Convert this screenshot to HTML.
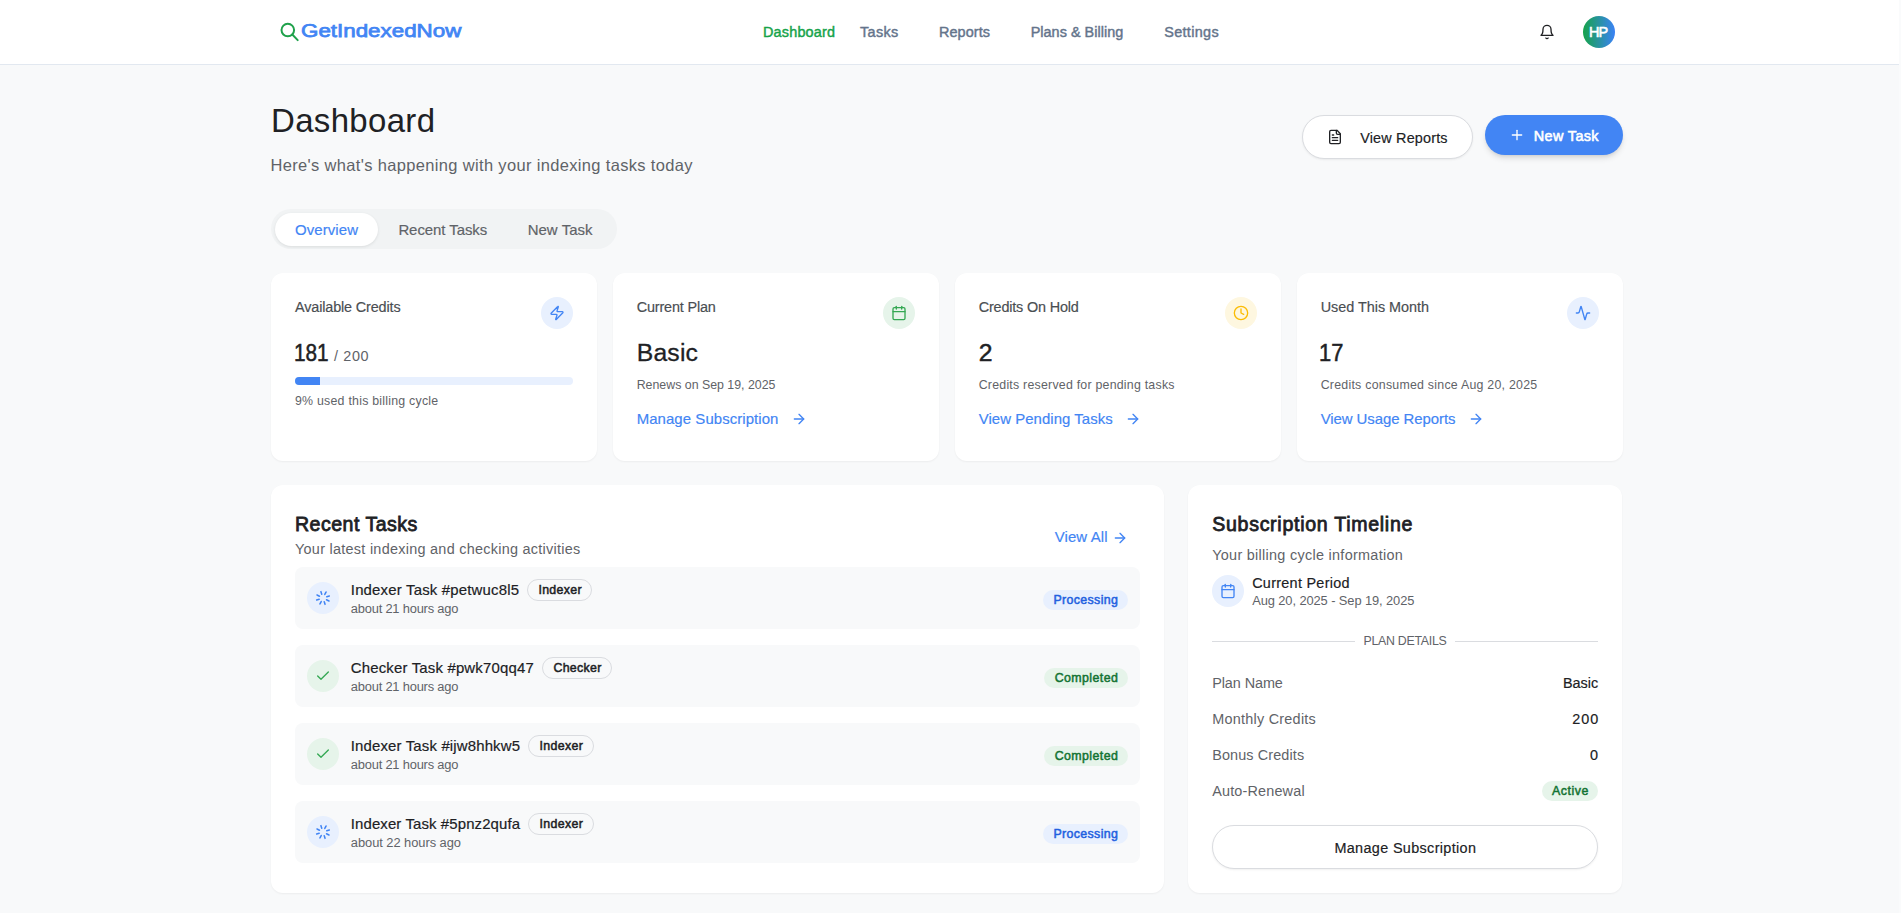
<!DOCTYPE html>
<html lang="en">
<head>
<meta charset="utf-8">
<title>Dashboard - GetIndexedNow</title>
<style>
*{box-sizing:border-box;margin:0;padding:0}
html,body{width:1901px;height:913px;overflow:hidden}
body{position:relative;background:#f8f9fa;font-family:"Liberation Sans",Arial,sans-serif;color:#202124;-webkit-font-smoothing:antialiased}
.t{position:absolute;white-space:nowrap;display:block}
.abs{position:absolute}
ul{list-style:none}
header{position:absolute;left:0;top:0;width:1899px;height:65px;background:#fff;border-bottom:1px solid #e2e8f0}
.scroll{position:absolute;right:0;top:0;width:2px;height:913px;background:#fafbfc}
svg{position:absolute;display:block;fill:none;stroke:currentColor;stroke-width:2;stroke-linecap:round;stroke-linejoin:round}
.card{position:absolute;background:#fff;border-radius:12px;box-shadow:0 1px 2px rgba(0,0,0,.05)}
.circle{position:absolute;width:32px;height:32px;border-radius:50%}
.row{position:absolute;left:295px;width:845px;height:62px;background:#f8f9fa;border-radius:8px}
.pill{position:absolute;border-radius:999px}
.badge{position:absolute;border:1px solid #dadce0;border-radius:999px;height:22px}
.btn{position:absolute;border-radius:999px}
#logo{top:22px;font-size:18.7px;line-height:18.7px;font-weight:400;-webkit-text-stroke:0.75px currentColor;color:#4285f4;left:301px;transform:scaleX(1.1961);transform-origin:0 0;}
#nav1{top:25px;font-size:14.42px;line-height:14.42px;font-weight:400;-webkit-text-stroke:0.43px currentColor;color:#16a34a;left:763px;letter-spacing:0.189px;}
#nav2{top:25px;font-size:14.42px;line-height:14.42px;font-weight:400;-webkit-text-stroke:0.43px currentColor;color:#64748b;left:860px;letter-spacing:0.343px;}
#nav3{top:25px;font-size:14.42px;line-height:14.42px;font-weight:400;-webkit-text-stroke:0.43px currentColor;color:#64748b;left:939px;letter-spacing:0.091px;}
#nav4{top:25px;font-size:14.42px;line-height:14.42px;font-weight:400;-webkit-text-stroke:0.43px currentColor;color:#64748b;left:1030.7px;letter-spacing:0.029px;}
#nav5{top:25px;font-size:14.42px;line-height:14.42px;font-weight:400;-webkit-text-stroke:0.43px currentColor;color:#64748b;left:1164.2px;letter-spacing:0.334px;}
#avatar{top:25px;font-size:14.42px;line-height:14.42px;font-weight:400;-webkit-text-stroke:0.58px currentColor;color:#fff;left:1589px;letter-spacing:-1.016px;}
#title{top:105px;font-size:32.96px;line-height:32.96px;font-weight:400;color:#202124;left:271px;letter-spacing:0.348px;}
#subtitle{top:157px;font-size:16.48px;line-height:16.48px;font-weight:400;color:#5f6368;left:270.5px;letter-spacing:0.347px;}
#btnReports{top:131px;font-size:14.42px;line-height:14.42px;font-weight:400;-webkit-text-stroke:0.17px currentColor;color:#202124;left:1360.2px;letter-spacing:0.18px;}
#btnNew{top:129px;font-size:14.42px;line-height:14.42px;font-weight:400;-webkit-text-stroke:0.58px currentColor;color:#fff;left:1533.7px;letter-spacing:0.387px;}
#tab1{top:223px;font-size:14.94px;line-height:14.94px;font-weight:400;-webkit-text-stroke:0.18px currentColor;color:#4285f4;left:295px;letter-spacing:0.105px;}
#tab2{top:223px;font-size:14.94px;line-height:14.94px;font-weight:400;-webkit-text-stroke:0.18px currentColor;color:#5f6368;left:398.4px;letter-spacing:-0.055px;}
#tab3{top:223px;font-size:14.94px;line-height:14.94px;font-weight:400;-webkit-text-stroke:0.18px currentColor;color:#5f6368;left:527.7px;letter-spacing:0.045px;}
#c1t{top:300px;font-size:14.42px;line-height:14.42px;font-weight:400;-webkit-text-stroke:0.17px currentColor;color:#4a4e52;left:295px;letter-spacing:-0.14px;}
#c1v{top:341px;font-size:24.72px;line-height:24.72px;font-weight:400;-webkit-text-stroke:0.54px currentColor;color:#202124;left:293.8px;}
#c1v2{top:349px;font-size:14.42px;line-height:14.42px;font-weight:400;color:#5f6368;left:334px;letter-spacing:0.638px;}
#c1s{top:395px;font-size:12.36px;line-height:12.36px;font-weight:400;color:#5f6368;left:295px;letter-spacing:0.232px;}
#c2t{top:300px;font-size:14.42px;line-height:14.42px;font-weight:400;-webkit-text-stroke:0.17px currentColor;color:#4a4e52;left:636.7px;letter-spacing:-0.161px;}
#c2v{top:341px;font-size:24.72px;line-height:24.72px;font-weight:400;-webkit-text-stroke:0.3px currentColor;color:#202124;left:636.7px;letter-spacing:0.212px;}
#c2s{top:379px;font-size:12.36px;line-height:12.36px;font-weight:400;color:#5f6368;left:636.7px;letter-spacing:-0.001px;}
#c2l{top:412px;font-size:14.94px;line-height:14.94px;font-weight:400;-webkit-text-stroke:0.18px currentColor;color:#4285f4;left:636.7px;letter-spacing:0.075px;}
#c3t{top:300px;font-size:14.42px;line-height:14.42px;font-weight:400;-webkit-text-stroke:0.17px currentColor;color:#4a4e52;left:978.7px;letter-spacing:-0.17px;}
#c3v{top:341px;font-size:24.72px;line-height:24.72px;font-weight:400;-webkit-text-stroke:0.49px currentColor;color:#202124;left:978.7px;letter-spacing:0.25px;}
#c3s{top:379px;font-size:12.36px;line-height:12.36px;font-weight:400;color:#5f6368;left:978.7px;letter-spacing:0.229px;}
#c3l{top:412px;font-size:14.94px;line-height:14.94px;font-weight:400;-webkit-text-stroke:0.18px currentColor;color:#4285f4;left:978.7px;letter-spacing:0.051px;}
#c4t{top:300px;font-size:14.42px;line-height:14.42px;font-weight:400;-webkit-text-stroke:0.17px currentColor;color:#4a4e52;left:1320.7px;letter-spacing:-0.024px;}
#c4v{top:341px;font-size:24.72px;line-height:24.72px;font-weight:400;-webkit-text-stroke:0.54px currentColor;color:#202124;left:1319.3px;}
#c4s{top:379px;font-size:12.36px;line-height:12.36px;font-weight:400;color:#5f6368;left:1320.7px;letter-spacing:0.244px;}
#c4l{top:412px;font-size:14.94px;line-height:14.94px;font-weight:400;-webkit-text-stroke:0.18px currentColor;color:#4285f4;left:1320.7px;letter-spacing:-0.064px;}
#rtT{top:515px;font-size:19.57px;line-height:19.57px;font-weight:400;-webkit-text-stroke:0.78px currentColor;color:#202124;left:295px;letter-spacing:0.484px;}
#rtS{top:542px;font-size:14.42px;line-height:14.42px;font-weight:400;color:#5f6368;left:295px;letter-spacing:0.278px;}
#rtA{top:530px;font-size:14.94px;line-height:14.94px;font-weight:400;-webkit-text-stroke:0.18px currentColor;color:#4285f4;left:1054.7px;letter-spacing:0.122px;}
#r1t{top:583px;font-size:14.94px;line-height:14.94px;font-weight:400;-webkit-text-stroke:0.18px currentColor;color:#202124;left:350.8px;letter-spacing:0.185px;}
#r1b{top:584px;font-size:12.36px;line-height:12.36px;font-weight:400;-webkit-text-stroke:0.49px currentColor;color:#202124;left:538.4px;letter-spacing:0.328px;}
#r1a{top:603px;font-size:12.88px;line-height:12.88px;font-weight:400;color:#5f6368;left:350.8px;letter-spacing:-0.198px;}
#r1s{top:594px;font-size:12.36px;line-height:12.36px;font-weight:400;-webkit-text-stroke:0.49px currentColor;color:#2160e0;left:1053.4px;letter-spacing:0.373px;}
#r2t{top:661px;font-size:14.94px;line-height:14.94px;font-weight:400;-webkit-text-stroke:0.18px currentColor;color:#202124;left:350.8px;letter-spacing:0.173px;}
#r2b{top:662px;font-size:12.36px;line-height:12.36px;font-weight:400;-webkit-text-stroke:0.49px currentColor;color:#202124;left:553.4px;letter-spacing:0.311px;}
#r2a{top:681px;font-size:12.88px;line-height:12.88px;font-weight:400;color:#5f6368;left:350.8px;letter-spacing:-0.198px;}
#r2s{top:672px;font-size:12.36px;line-height:12.36px;font-weight:400;-webkit-text-stroke:0.49px currentColor;color:#137333;left:1054.7px;letter-spacing:0.427px;}
#r3t{top:739px;font-size:14.94px;line-height:14.94px;font-weight:400;-webkit-text-stroke:0.18px currentColor;color:#202124;left:350.8px;letter-spacing:0.155px;}
#r3b{top:740px;font-size:12.36px;line-height:12.36px;font-weight:400;-webkit-text-stroke:0.49px currentColor;color:#202124;left:539.4px;letter-spacing:0.394px;}
#r3a{top:759px;font-size:12.88px;line-height:12.88px;font-weight:400;color:#5f6368;left:350.8px;letter-spacing:-0.198px;}
#r3s{top:750px;font-size:12.36px;line-height:12.36px;font-weight:400;-webkit-text-stroke:0.49px currentColor;color:#137333;left:1054.7px;letter-spacing:0.427px;}
#r4t{top:817px;font-size:14.94px;line-height:14.94px;font-weight:400;-webkit-text-stroke:0.18px currentColor;color:#202124;left:350.8px;letter-spacing:0.116px;}
#r4b{top:818px;font-size:12.36px;line-height:12.36px;font-weight:400;-webkit-text-stroke:0.49px currentColor;color:#202124;left:539.4px;letter-spacing:0.394px;}
#r4a{top:837px;font-size:12.88px;line-height:12.88px;font-weight:400;color:#5f6368;left:350.8px;letter-spacing:-0.045px;}
#r4s{top:828px;font-size:12.36px;line-height:12.36px;font-weight:400;-webkit-text-stroke:0.49px currentColor;color:#2160e0;left:1053.4px;letter-spacing:0.373px;}
#stT{top:515px;font-size:19.57px;line-height:19.57px;font-weight:400;-webkit-text-stroke:0.78px currentColor;color:#202124;left:1212.2px;letter-spacing:0.713px;}
#stS{top:548px;font-size:14.42px;line-height:14.42px;font-weight:400;color:#5f6368;left:1212.2px;letter-spacing:0.295px;}
#stP{top:576px;font-size:14.42px;line-height:14.42px;font-weight:400;-webkit-text-stroke:0.17px currentColor;color:#202124;left:1252.2px;letter-spacing:0.278px;}
#stD{top:595px;font-size:12.88px;line-height:12.88px;font-weight:400;color:#5f6368;left:1252.2px;letter-spacing:-0.094px;}
#stH{top:635px;font-size:12.36px;line-height:12.36px;font-weight:400;color:#5f6368;left:1363.5px;letter-spacing:-0.275px;}
#k1{top:676px;font-size:14.42px;line-height:14.42px;font-weight:400;color:#5f6368;left:1212.2px;letter-spacing:-0.071px;}
#v1{top:676px;font-size:14.42px;line-height:14.42px;font-weight:400;-webkit-text-stroke:0.17px currentColor;color:#202124;left:1563px;letter-spacing:-0.009px;}
#k2{top:712px;font-size:14.42px;line-height:14.42px;font-weight:400;color:#5f6368;left:1212.2px;letter-spacing:0.252px;}
#v2{top:712px;font-size:14.42px;line-height:14.42px;font-weight:400;-webkit-text-stroke:0.17px currentColor;color:#202124;left:1572.3px;letter-spacing:0.927px;}
#k3{top:748px;font-size:14.42px;line-height:14.42px;font-weight:400;color:#5f6368;left:1212.2px;letter-spacing:0.118px;}
#v3{top:748px;font-size:14.42px;line-height:14.42px;font-weight:400;-webkit-text-stroke:0.17px currentColor;color:#202124;left:1589.9px;letter-spacing:0.284px;}
#k4{top:784px;font-size:14.42px;line-height:14.42px;font-weight:400;color:#5f6368;left:1212.2px;letter-spacing:0.173px;}
#v4{top:785px;font-size:12.36px;line-height:12.36px;font-weight:400;-webkit-text-stroke:0.49px currentColor;color:#137333;left:1552px;letter-spacing:0.546px;}
#stB{top:841px;font-size:14.42px;line-height:14.42px;font-weight:400;-webkit-text-stroke:0.17px currentColor;color:#202124;left:1334.4px;letter-spacing:0.348px;}
</style>
</head>
<body>
<header>
  <a class="brand">
    <svg style="left:274px;top:16px;color:#1fa14b;stroke-width:2" width="36" height="30" viewBox="0 0 36 30"><circle cx="13.8" cy="14.05" r="6.3"/><path d="M18.3 18.55 23.7 24.1"/></svg>
    <span class="t" id="logo">GetIndexedNow</span>
  </a>
  <nav>
    <a class="t" id="nav1">Dashboard</a>
    <a class="t" id="nav2">Tasks</a>
    <a class="t" id="nav3">Reports</a>
    <a class="t" id="nav4">Plans &amp; Billing</a>
    <a class="t" id="nav5">Settings</a>
  </nav>
  <svg style="left:1539px;top:24px;color:#202124;stroke-width:2" width="16" height="16" viewBox="0 0 24 24"><path d="M6 8a6 6 0 0 1 12 0c0 7 3 9 3 9H3s3-2 3-9"/><path d="M10.3 21a1.94 1.94 0 0 0 3.4 0"/></svg>
  <div class="circle" style="left:1583px;top:16px;background:linear-gradient(90deg,#16a34a,#3b82f6)"></div>
  <span class="t" id="avatar">HP</span>
</header>
<div class="scroll"></div>

<main>
  <div class="page-head">
  <h1 class="t" id="title">Dashboard</h1>
  <p class="t" id="subtitle">Here's what's happening with your indexing tasks today</p>

  <div class="actions">
  <a class="btn" style="left:1302px;top:115px;width:171px;height:44px;background:#fff;border:1px solid #dadce0;box-shadow:0 1px 2px rgba(60,64,67,.08)"></a>
  <svg style="left:1327px;top:129px;color:#202124" width="16" height="16" viewBox="0 0 24 24"><path d="M15 2H6a2 2 0 0 0-2 2v16a2 2 0 0 0 2 2h12a2 2 0 0 0 2-2V7Z"/><path d="M14 2v4a2 2 0 0 0 2 2h4"/><path d="M10 9H8"/><path d="M16 13H8"/><path d="M16 17H8"/></svg>
  <span class="t" id="btnReports">View Reports</span>

  <a class="btn" style="left:1485px;top:115px;width:138px;height:40px;background:#4285f4;box-shadow:0 4px 6px -1px rgba(0,0,0,.12),0 2px 4px -2px rgba(0,0,0,.12)"></a>
  <svg style="left:1509px;top:127.4px;color:#fff" width="16" height="16" viewBox="0 0 24 24"><path d="M5 12h14"/><path d="M12 5v14"/></svg>
  <span class="t" id="btnNew">New Task</span>
  </div>
  </div>

  <div class="tabs" role="tablist">
  <div class="pill" style="left:271px;top:209px;width:346px;height:40px;background:#f1f3f4"></div>
  <div class="pill" style="left:275px;top:213px;width:103px;height:33px;background:#fff;box-shadow:0 1px 3px rgba(60,64,67,.12)"></div>
  <span class="t" id="tab1">Overview</span>
  <span class="t" id="tab2">Recent Tasks</span>
  <span class="t" id="tab3">New Task</span>
  </div>

  <section class="stats">
  <article class="stat">
  <div class="card" style="left:271px;top:273px;width:326px;height:188px"></div>
  <span class="t" id="c1t">Available Credits</span>
  <div class="circle" style="left:541px;top:297px;background:#e8f0fe"></div>
  <svg style="left:549px;top:305px;color:#4285f4" width="16" height="16" viewBox="0 0 24 24"><path d="M4 14a1 1 0 0 1-.78-1.63l9.9-10.2a.5.5 0 0 1 .86.46l-1.92 6.02A1 1 0 0 0 13 10h7a1 1 0 0 1 .78 1.63l-9.9 10.2a.5.5 0 0 1-.86-.46l1.92-6.02A1 1 0 0 0 11 14z"/></svg>
  <span class="t" id="c1v" style="transform:scaleX(.84);transform-origin:0 0">181</span>
  <span class="t" id="c1v2">/ 200</span>
  <div class="pill" style="left:295px;top:377px;width:278px;height:8px;background:#e8f0fe"></div>
  <div class="pill" style="left:295px;top:377px;width:25px;height:8px;background:#4285f4;border-radius:999px 0 0 999px"></div>
  <span class="t" id="c1s">9% used this billing cycle</span>
  </article>

  <article class="stat">
  <div class="card" style="left:613px;top:273px;width:326px;height:188px"></div>
  <span class="t" id="c2t">Current Plan</span>
  <div class="circle" style="left:883px;top:297px;background:#e6f4ea"></div>
  <svg style="left:891px;top:305px;color:#34a853" width="16" height="16" viewBox="0 0 24 24"><path d="M8 2v4"/><path d="M16 2v4"/><rect width="18" height="18" x="3" y="4" rx="2"/><path d="M3 10h18"/></svg>
  <span class="t" id="c2v">Basic</span>
  <span class="t" id="c2s">Renews on Sep 19, 2025</span>
  <a class="t" id="c2l">Manage Subscription</a>
  <svg style="left:791px;top:411px;color:#4285f4" width="16" height="16" viewBox="0 0 24 24"><path d="M5 12h14"/><path d="m12 5 7 7-7 7"/></svg>
  </article>

  <article class="stat">
  <div class="card" style="left:955px;top:273px;width:326px;height:188px"></div>
  <span class="t" id="c3t">Credits On Hold</span>
  <div class="circle" style="left:1225px;top:297px;background:#fef7e0"></div>
  <svg style="left:1233px;top:305px;color:#fbbc04" width="16" height="16" viewBox="0 0 24 24"><circle cx="12" cy="12" r="10"/><path d="M12 6v6l4 2"/></svg>
  <span class="t" id="c3v">2</span>
  <span class="t" id="c3s">Credits reserved for pending tasks</span>
  <a class="t" id="c3l">View Pending Tasks</a>
  <svg style="left:1124.7px;top:411px;color:#4285f4" width="16" height="16" viewBox="0 0 24 24"><path d="M5 12h14"/><path d="m12 5 7 7-7 7"/></svg>
  </article>

  <article class="stat">
  <div class="card" style="left:1297px;top:273px;width:326px;height:188px"></div>
  <span class="t" id="c4t">Used This Month</span>
  <div class="circle" style="left:1567px;top:297px;background:#e8f0fe"></div>
  <svg style="left:1575px;top:305px;color:#4285f4" width="16" height="16" viewBox="0 0 24 24"><path d="M22 12h-2.48a2 2 0 0 0-1.93 1.46l-2.35 8.36a.25.25 0 0 1-.48 0L9.24 2.18a.25.25 0 0 0-.48 0l-2.35 8.36A2 2 0 0 1 4.49 12H2"/></svg>
  <span class="t" id="c4v" style="transform:scaleX(.885);transform-origin:0 0">17</span>
  <span class="t" id="c4s">Credits consumed since Aug 20, 2025</span>
  <a class="t" id="c4l">View Usage Reports</a>
  <svg style="left:1468px;top:411px;color:#4285f4" width="16" height="16" viewBox="0 0 24 24"><path d="M5 12h14"/><path d="m12 5 7 7-7 7"/></svg>
  </article>

  </section>

  <section class="recent">
  <div class="card" style="left:271px;top:485px;width:893px;height:408px"></div>
  <h2 class="t" id="rtT">Recent Tasks</h2>
  <p class="t" id="rtS">Your latest indexing and checking activities</p>
  <a class="t" id="rtA">View All</a>
  <svg style="left:1112.3px;top:529.5px;color:#4285f4" width="16" height="16" viewBox="0 0 24 24"><path d="M5 12h14"/><path d="m12 5 7 7-7 7"/></svg>

  <ul class="tasks">
    <li class="task">
  <div class="row" style="top:567px"></div>
  <div class="circle" style="left:307px;top:582px;background:#e8f0fe"></div>
  <svg style="left:315px;top:590px;color:#4285f4;stroke-width:2.3;transform:rotate(-18deg)" width="16" height="16" viewBox="0 0 24 24"><path d="M12 2v4"/><path d="m16.2 7.8 2.9-2.9"/><path d="M18 12h4"/><path d="m16.2 16.2 2.9 2.9"/><path d="M12 18v4"/><path d="m4.9 19.1 2.9-2.9"/><path d="M2 12h4"/><path d="m4.9 4.9 2.9 2.9"/></svg>
  <span class="t" id="r1t">Indexer Task #petwuc8l5</span>
  <div class="badge" style="left:527px;top:579px;width:65px"></div>
  <span class="t" id="r1b">Indexer</span>
  <span class="t" id="r1a">about 21 hours ago</span>
  <div class="pill" style="left:1043px;top:590px;width:85px;height:20px;background:#e8f0fe"></div>
  <span class="t" id="r1s">Processing</span>
    </li>
    <li class="task">
  <div class="row" style="top:645px"></div>
  <div class="circle" style="left:307px;top:660px;background:#e6f4ea"></div>
  <svg style="left:315px;top:668px;color:#34a853" width="16" height="16" viewBox="0 0 24 24"><path d="M20 6 9 17l-5-5"/></svg>
  <span class="t" id="r2t">Checker Task #pwk70qq47</span>
  <div class="badge" style="left:542px;top:657px;width:70px"></div>
  <span class="t" id="r2b">Checker</span>
  <span class="t" id="r2a">about 21 hours ago</span>
  <div class="pill" style="left:1044px;top:668px;width:84px;height:20px;background:#e6f4ea"></div>
  <span class="t" id="r2s">Completed</span>
    </li>
    <li class="task">
  <div class="row" style="top:723px"></div>
  <div class="circle" style="left:307px;top:738px;background:#e6f4ea"></div>
  <svg style="left:315px;top:746px;color:#34a853" width="16" height="16" viewBox="0 0 24 24"><path d="M20 6 9 17l-5-5"/></svg>
  <span class="t" id="r3t">Indexer Task #ijw8hhkw5</span>
  <div class="badge" style="left:528px;top:735px;width:66px"></div>
  <span class="t" id="r3b">Indexer</span>
  <span class="t" id="r3a">about 21 hours ago</span>
  <div class="pill" style="left:1044px;top:746px;width:84px;height:20px;background:#e6f4ea"></div>
  <span class="t" id="r3s">Completed</span>
    </li>
    <li class="task">
  <div class="row" style="top:801px"></div>
  <div class="circle" style="left:307px;top:816px;background:#e8f0fe"></div>
  <svg style="left:315px;top:824px;color:#4285f4;stroke-width:2.3;transform:rotate(-18deg)" width="16" height="16" viewBox="0 0 24 24"><path d="M12 2v4"/><path d="m16.2 7.8 2.9-2.9"/><path d="M18 12h4"/><path d="m16.2 16.2 2.9 2.9"/><path d="M12 18v4"/><path d="m4.9 19.1 2.9-2.9"/><path d="M2 12h4"/><path d="m4.9 4.9 2.9 2.9"/></svg>
  <span class="t" id="r4t">Indexer Task #5pnz2qufa</span>
  <div class="badge" style="left:528px;top:813px;width:66px"></div>
  <span class="t" id="r4b">Indexer</span>
  <span class="t" id="r4a">about 22 hours ago</span>
  <div class="pill" style="left:1043px;top:824px;width:85px;height:20px;background:#e8f0fe"></div>
  <span class="t" id="r4s">Processing</span>
    </li>
  </ul>
  </section>

  <aside class="subscription">
  <div class="card" style="left:1188px;top:485px;width:434px;height:408px"></div>
  <h2 class="t" id="stT">Subscription Timeline</h2>
  <p class="t" id="stS">Your billing cycle information</p>
  <div class="circle" style="left:1212px;top:575px;background:#e8f0fe"></div>
  <svg style="left:1220px;top:583px;color:#4285f4" width="16" height="16" viewBox="0 0 24 24"><path d="M8 2v4"/><path d="M16 2v4"/><rect width="18" height="18" x="3" y="4" rx="2"/><path d="M3 10h18"/></svg>
  <span class="t" id="stP">Current Period</span>
  <span class="t" id="stD">Aug 20, 2025 - Sep 19, 2025</span>
  <div class="abs" style="left:1212px;top:641px;width:143px;height:1px;background:#dadce0"></div>
  <div class="abs" style="left:1455px;top:641px;width:143px;height:1px;background:#dadce0"></div>
  <span class="t" id="stH">PLAN DETAILS</span>
  <span class="t" id="k1">Plan Name</span><span class="t" id="v1">Basic</span>
  <span class="t" id="k2">Monthly Credits</span><span class="t" id="v2">200</span>
  <span class="t" id="k3">Bonus Credits</span><span class="t" id="v3">0</span>
  <span class="t" id="k4">Auto-Renewal</span>
  <div class="pill" style="left:1542px;top:781px;width:56px;height:20px;background:#e6f4ea"></div>
  <span class="t" id="v4">Active</span>
  <a class="btn" style="left:1212px;top:825px;width:386px;height:44px;background:#fff;border:1px solid #dadce0;box-shadow:0 1px 2px rgba(60,64,67,.08)"></a>
  <span class="t" id="stB">Manage Subscription</span>
  </aside>
</main>
</body>
</html>
